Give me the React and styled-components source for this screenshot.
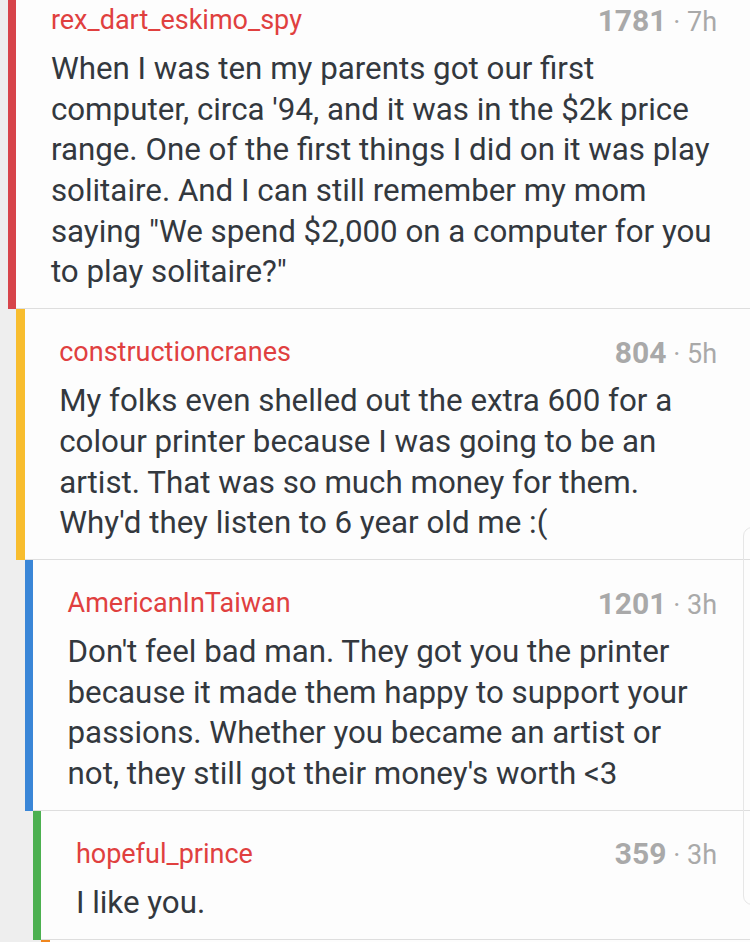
import React from "react";
import styled, { createGlobalStyle } from "styled-components";

const comments = [
  {
    user: "rex_dart_eskimo_spy",
    score: 1781,
    age: "7h",
    color: "#d7444a",
    body:
      "When I was ten my parents got our first computer, circa '94, and it was in the $2k price range. One of the first things I did on it was play solitaire. And I can still remember my mom saying \"We spend $2,000 on a computer for you to play solitaire?\"",
  },
  {
    user: "constructioncranes",
    score: 804,
    age: "5h",
    color: "#f8bd2e",
    body:
      "My folks even shelled out the extra 600 for a colour printer because I was going to be an artist. That was so much money for them. Why'd they listen to 6 year old me :(",
  },
  {
    user: "AmericanInTaiwan",
    score: 1201,
    age: "3h",
    color: "#3a86d7",
    body:
      "Don't feel bad man. They got you the printer because it made them happy to support your passions. Whether you became an artist or not, they still got their money's worth <3",
  },
  {
    user: "hopeful_prince",
    score: 359,
    age: "3h",
    color: "#4cb050",
    body: "I like you.",
  },
  { user: "", score: null, age: "", color: "#f0861e", body: "" },
];

export default function App() {
  return (
    <>
      <GlobalStyle />
      <Page>
        <Thread>
          {comments.map((c, i) => (
            <Comment.Row key={i} $depth={i}>
              <Comment.Bar $color={c.color} />
              <Comment.Card>
                <Comment.Header>
                  <Comment.User>{c.user}</Comment.User>
                  {c.score !== null && (
                    <Comment.Meta>
                      <Comment.Score>{c.score}</Comment.Score>
                      <Comment.Age> · {c.age}</Comment.Age>
                    </Comment.Meta>
                  )}
                </Comment.Header>
                <Comment.Body>{c.body}</Comment.Body>
              </Comment.Card>
            </Comment.Row>
          ))}
        </Thread>
        <ScrollGhost />
      </Page>
    </>
  );
}

const GlobalStyle = createGlobalStyle`
  html, body {
    margin: 0;
    overflow: hidden;
    background: #eeeeee;
    font-family: Roboto, "Noto Sans", Arial, sans-serif;
  }
`;

const Page = styled.div`
  position: relative;
  height: 942px;
  overflow: hidden;
`;

const Thread = styled.div`
  display: flex;
  flex-direction: column;
  margin-top: -23px;
`;

const Comment = {
  Row: styled.div`
    display: flex;
    margin-left: ${(p) => 8 + p.$depth * 8.33}px;
  `,
  Bar: styled.div`
    flex: 0 0 8.4px;
    background: ${(p) => p.$color};
  `,
  Card: styled.div`
    flex: 1;
    min-width: 0;
    background: #fdfdfd;
    border-bottom: 1.5px solid #dedede;
    padding: 28px 33px 15.2px 34.5px;
  `,
  Header: styled.div`
    display: flex;
    align-items: center;
    justify-content: space-between;
    height: 30px;
  `,
  User: styled.span`
    color: #e0403f;
    font-size: 27px;
  `,
  Meta: styled.span`
    color: #a9a9a9;
    white-space: nowrap;
  `,
  Score: styled.span`
    font-size: 30px;
    font-weight: 700;
  `,
  Age: styled.span`
    font-size: 27px;
    white-space: pre;
  `,
  Body: styled.p`
    margin: 14px 0 0;
    color: #33383e;
    font-size: 31.3px;
    line-height: 40.67px;
  `,
};

const ScrollGhost = styled.div`
  position: absolute;
  left: 743px;
  top: 527px;
  width: 20px;
  height: 376px;
  border: 1px solid #e6e6e6;
  border-radius: 9px;
`;
